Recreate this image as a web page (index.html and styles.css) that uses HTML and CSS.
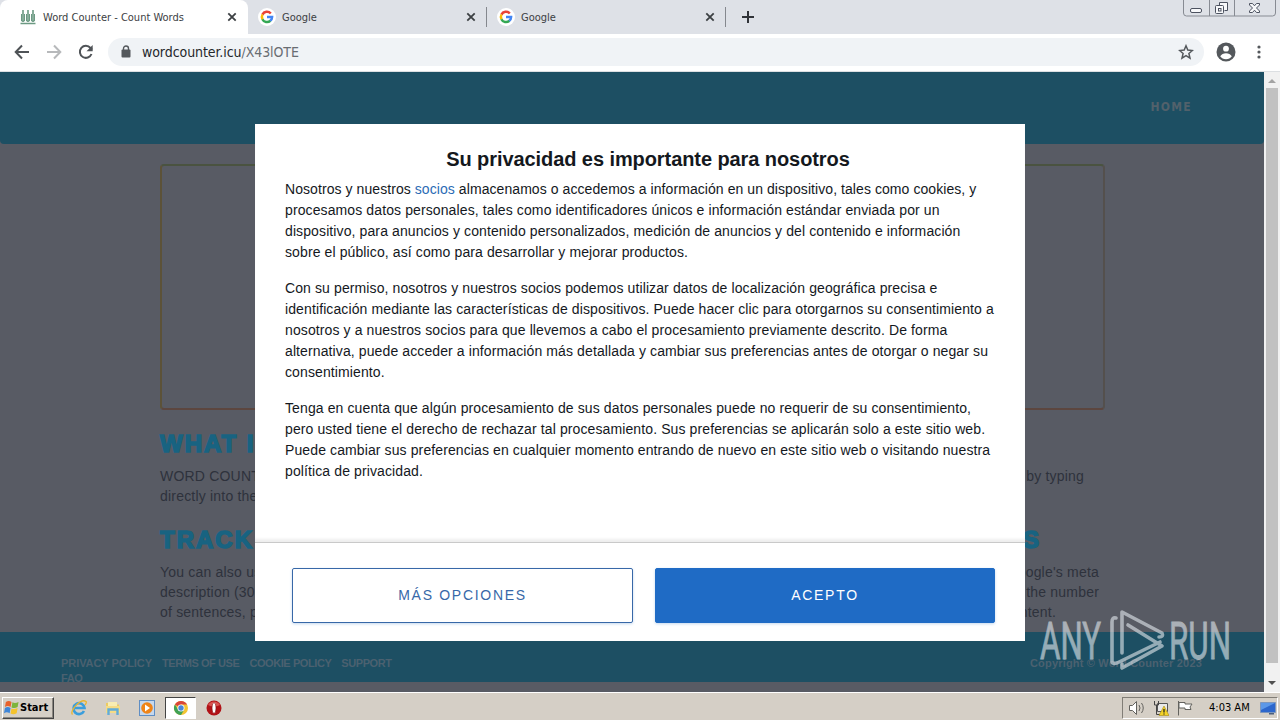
FILE: index.html
```html
<!DOCTYPE html>
<html lang="es">
  <head>
    <meta charset="utf-8">
    <title>Word Counter - Count Words</title>
    <link rel="stylesheet" href="styles.css">
  </head>
  <body>
    <svg width="0" height="0" class="defs">
      <symbol id="google" viewBox="0 0 18 18">
        <circle cx="9" cy="9" r="9" fill="#fff"/>
        <g fill="none" stroke-width="2.5">
          <path d="M4.4 6.6A5.1 5.1 0 0 1 12.8 5.5" stroke="#ea4335"/>
          <path d="M4.5 11.4A5.1 5.1 0 0 1 4.5 6.5" stroke="#fbbc05"/>
          <path d="M12.4 12.8A5.1 5.1 0 0 1 4.4 11.2" stroke="#34a853"/>
          <path d="M9 9H14.1A5.1 5.1 0 0 1 12.2 12.9" stroke="#4285f4"/>
        </g>
      </symbol>
      <symbol id="close" viewBox="0 0 10 10">
        <path d="M1.3 1.3l7.4 7.4M8.7 1.3L1.3 8.7" stroke="#3c4043" stroke-width="1.8"/>
      </symbol>
    </svg>

    <div class="tabs">
      <div class="tab active">
        <svg class="favicon" viewBox="0 0 16 16" fill="none" stroke="#6c9a83">
          <path d="M3 1v12M8 1v12M13 1v12" stroke-width="1.6"/>
          <path d="M1.5 5v7h3V5M6.5 5v7h3V5M11.5 5v7h3V5" stroke-width="1"/>
          <path d="M.5 14.500h15" stroke-width="1.500"/>
        </svg>
        <span class="tab-title">Word Counter - Count Words</span>
        <svg class="close"><use href="#close"/></svg>
      </div>
      <div class="tab">
        <svg class="google"><use href="#google"/></svg>
        <span class="tab-title">Google</span>
        <svg class="close"><use href="#close"/></svg>
      </div>
      <div class="tab">
        <svg class="google"><use href="#google"/></svg>
        <span class="tab-title">Google</span>
        <svg class="close"><use href="#close"/></svg>
      </div>
      <svg class="new-tab" viewBox="0 0 12 12"><path d="M6 0v12M0 6h12" stroke="#303338" stroke-width="2"/></svg>
      <svg class="window-buttons" viewBox="0 0 94 17" fill="none">
        <path d="M.5 0v13q0 3 3 3h86q3 0 3-3V0M26.500 0v16M51.500 0v16" stroke="#878b93"/>
        <g stroke="#4c5260">
          <rect x="7.500" y="8.500" width="11" height="4" rx="1.500" fill="#f7f8fa"/>
          <path d="M36.500 5.500v-3h8v8h-3" fill="#f7f8fa"/>
          <rect x="32.500" y="5.500" width="8" height="8" rx="1" fill="#f7f8fa"/>
          <rect x="35.500" y="8.500" width="2.500" height="2.500"/>
          <path d="M66.500 3.500h3l2 2.300 2-2.300h3v1.500l-3 3 3 3v1.500h-3l-2-2.300-2 2.300h-3V11l3-3-3-3z" fill="#f7f8fa"/>
        </g>
      </svg>
    </div>

    <div class="toolbar">
      <svg class="nav-icon" viewBox="0 0 16 16" fill="none" stroke="#4f5357" stroke-width="2"><path d="M15 8H2M8 1.500L1.700 8 8 14.500"/></svg>
      <svg class="nav-icon" viewBox="0 0 16 16" fill="none" stroke="#b7b9bb" stroke-width="2"><path d="M1 8h13M8 1.500L14.300 8 8 14.500"/></svg>
      <svg class="nav-icon" viewBox="0 0 16 16" fill="none" stroke="#4f5357" stroke-width="2"><path d="M13.500 10A6 6 0 1 1 12.500 4L14 5.700"/><path d="M14.700 1v6.200H8.500z" fill="#4f5357" stroke="none"/></svg>
      <div class="address">
        <svg class="lock" viewBox="0 0 10 13"><path d="M2.500 5V3.500a2.500 2.500 0 0 1 5 0V5" fill="none" stroke="#54585c" stroke-width="1.400"/><rect x="0.500" y="4.500" width="9" height="8" rx="1" fill="#54585c"/></svg>
        <span class="url">wordcounter.icu<span class="path">/X43lOTE</span></span>
        <svg class="star" viewBox="0 0 16 16" fill="none" stroke="#54585c" stroke-width="1.500"><path d="M8 1.800l1.800 4.300 4.600.4-3.500 3 1.100 4.600L8 11.700l-4 2.400 1.100-4.600-3.500-3 4.600-.4z"/></svg>
      </div>
      <svg class="avatar" viewBox="0 0 20 20"><circle cx="10" cy="10" r="9.500" fill="#54585c"/><circle cx="10" cy="6.700" r="2.900" fill="#fff"/><path d="M4.200 14.300q2-3 5.800-3t5.800 3q-2 2.900-5.800 2.900t-5.800-2.900z" fill="#fff"/></svg>
      <svg class="kebab" viewBox="0 0 4 14" fill="#54585c"><circle cx="2" cy="2" r="1.600"/><circle cx="2" cy="7" r="1.600"/><circle cx="2" cy="12" r="1.600"/></svg>
    </div>

    <div class="viewport">
      <div class="site">
        <header>HOME</header>
        <main>
          <div class="editor"></div>
          <h2>WHAT I</h2>
          <p class="row"><span>WORD COUNT</span><span class="end-a">by typing</span></p>
          <p class="row"><span>directly into the</span></p>
          <h2 class="row"><span>TRACK</span><span class="end-h">S</span></h2>
          <p class="row"><span>You can also us</span><span>oogle's meta</span></p>
          <p class="row"><span>description (30</span><span>the number</span></p>
          <p class="row"><span>of sentences, p</span><span class="end-b">ntent.</span></p>
        </main>
        <footer>
          <div class="links">
            <span class="first">PRIVACY POLICY</span><span>TERMS OF USE</span><span>COOKIE POLICY</span><span>SUPPORT</span><span>FAQ</span>
          </div>
          <div class="copyright">Copyright © Word Counter 2023</div>
        </footer>
      </div>
      <div class="scrollbar">
        <svg viewBox="0 0 8 4"><path d="M0 4l4-4 4 4z" fill="#a3a3a3"/></svg>
        <div class="thumb"></div>
        <svg viewBox="0 0 8 4"><path d="M0 0l4 4 4-4z" fill="#505050"/></svg>
      </div>

      <div class="modal">
        <div class="modal-body">
          <h1>Su privacidad es importante para nosotros</h1>
          <p><span class="tight">Nosotros y nuestros <a>socios</a> almacenamos o accedemos a información en un dispositivo, tales como cookies, y</span><br>
            procesamos datos personales, tales como identificadores únicos e información estándar enviada por un<br>
            dispositivo, para anuncios y contenido personalizados, medición de anuncios y del contenido e información<br>
            sobre el público, así como para desarrollar y mejorar productos.</p>
          <p>Con su permiso, nosotros y nuestros socios podemos utilizar datos de localización geográfica precisa e<br>
            identificación mediante las características de dispositivos. Puede hacer clic para otorgarnos su consentimiento a<br>
            nosotros y a nuestros socios para que llevemos a cabo el procesamiento previamente descrito. De forma<br>
            alternativa, puede acceder a información más detallada y cambiar sus preferencias antes de otorgar o negar su<br>
            consentimiento.</p>
          <p>Tenga en cuenta que algún procesamiento de sus datos personales puede no requerir de su consentimiento,<br>
            pero usted tiene el derecho de rechazar tal procesamiento. Sus preferencias se aplicarán solo a este sitio web.<br>
            Puede cambiar sus preferencias en cualquier momento entrando de nuevo en este sitio web o visitando nuestra<br>
            política de privacidad.</p>
        </div>
        <div class="modal-actions">
          <button>MÁS OPCIONES</button>
          <button class="primary">ACEPTO</button>
        </div>
      </div>

      <svg class="watermark" viewBox="0 0 200 64">
        <text x="5" y="51" textLength="61" lengthAdjust="spacingAndGlyphs">ANY</text>
        <text x="134" y="51" textLength="62" lengthAdjust="spacingAndGlyphs">RUN</text>
        <g fill="none" stroke-width="3.6" stroke-linejoin="round" stroke-linecap="round">
          <path d="M81 10q-4-1-4 4v40q0 2 5 1l43-21"/>
          <path d="M87 45V4l40 21q2 4-3 4"/>
          <path d="M93 17l34 21-40 22v-4"/>
        </g>
      </svg>
    </div>

    <div class="taskbar">
      <div class="start">
        <svg viewBox="0 0 16 15"><path d="M2 1.500q3-2 6 0L7 7q-3-2-6 0z" fill="#e8622c"/><path d="M9 2q3 1.500 6.500-.5l-1 5.500q-3 2-6.500.5z" fill="#7db43a"/><path d="M1 8q3-2 6 0l-1 5.500q-3-2-6 0z" fill="#3f86d8"/><path d="M8 8.500q3 1.500 6.500-.5l-1 5.500q-3 2-6.500.5z" fill="#f5c32c"/></svg>
        <span>Start</span>
      </div>
      <div class="apps">
        <svg viewBox="0 0 16 16" fill="none"><path d="M13 11a5.500 5.500 0 1 1 .5-3H4" stroke="#3b9edc" stroke-width="2.600"/><path d="M1.500 14.500C-2 11 10-2 15 1.500q1 1-1 3.500" stroke="#e9b52f" stroke-width="1.300"/></svg>
        <svg viewBox="0 0 16 16"><path d="M1 3h5l1 1.500h7V13H1z" fill="#eccb63"/><path d="M3 2h9v4H3z" fill="#f8edb2"/><path d="M1 6h14v7H1z" fill="#f5dc86"/><path d="M3.500 15V9.500h9V15" fill="none" stroke="#62acd8" stroke-width="2.400"/></svg>
        <svg viewBox="0 0 16 16"><rect x=".5" y=".5" width="15" height="15" fill="#c6d8ed" stroke="#5f8ec4"/><circle cx="8" cy="8" r="5.800" fill="#ef8418"/><path d="M6 4.500l5 3.500-5 3.500z" fill="#fff"/></svg>
        <div class="app-active">
          <svg viewBox="0 0 16 16"><circle cx="8" cy="8" r="7" fill="#f3c433"/><path d="M8 8L1.900 4.500A7 7 0 0 1 14.100 4.500H8z" fill="#d9453b"/><path d="M1.900 4.500A7 7 0 0 0 8 15l3.200-5.200L8 8 5 9.500z" fill="#3fa155"/><circle cx="8" cy="8" r="3.500" fill="#fff"/><circle cx="8" cy="8" r="2.700" fill="#4a86d8"/></svg>
        </div>
        <svg viewBox="0 0 16 16"><circle cx="8" cy="8" r="7.500" fill="#b11217"/><path d="M2 5a7 7 0 0 1 12 0q-6 3-12 0z" fill="#d9534f"/><ellipse cx="8" cy="8" rx="2" ry="5.300" fill="#fff" stroke="#7d0a0e" stroke-width=".6"/></svg>
      </div>
      <div class="tray">
        <svg viewBox="0 0 16 16" fill="#fff" stroke="#63625e"><path d="M.5 5.500h3l4-4v13l-4-4h-3z"/><path d="M10 5q2 3 0 6M12.500 3q3.500 5 0 10" fill="none"/></svg>
        <svg viewBox="0 0 16 16"><path d="M4.500 3.500h10v8h-10z" fill="#e9e9e9" stroke="#555"/><path d="M1.500 1v4h4V1M3.500 5v9.500h5" fill="none" stroke="#444"/><path d="M11 6l5 9.500H6z" fill="#f4d327" stroke="#a88a10" stroke-width=".6"/><path d="M11 9v3.500M11 13.500v1" stroke="#222" stroke-width="1.300"/></svg>
        <svg viewBox="0 0 16 16" fill="#fff" stroke="#63625e"><path d="M1.500 1v14.500M2 2.500h6v1.500h7l-2 3 1 2.500H8V8H2z"/></svg>
        <span class="clock">4:03 AM</span>
        <svg viewBox="0 0 16 16"><path d="M.5 2.500h15v10H.5z" fill="#2d67cc" stroke="#7d97bd"/><path d="M1 3h14L1 10z" fill="#5c98e8"/><path d="M9 13h5v1.500H9z" fill="#4c5f7c"/></svg>
      </div>
    </div>
  </body>
</html>
```

FILE: styles.css
```css
* {
  box-sizing: border-box;
}

body {
  margin: 0;
  width: 1280px;
  height: 720px;
  overflow: hidden;
  display: flex;
  flex-direction: column;
  font-family: "Liberation Sans", Arial, sans-serif;
}

svg {
  display: block;
  flex: none;
}

.defs {
  position: absolute;
}

/* browser tabs */
.tabs {
  display: flex;
  align-items: center;
  height: 34px;
  flex: none;
  background: #dee1e7;
}

.tab {
  display: flex;
  align-items: center;
  width: 239px;
  height: 20px;
  padding: 0 10px;
  border-right: 1px solid #85888e;
}

.tab.active {
  width: 248px;
  height: 34px;
  padding: 0 11px 0 20px;
  border: 0;
  border-radius: 8px 8px 0 0;
  background: #fff;
}

.favicon {
  width: 16px;
  height: 16px;
  margin-right: 7px;
}

.google {
  width: 18px;
  height: 18px;
  margin-right: 6px;
}

.tab-title {
  flex: 1;
  font: 11px "DejaVu Sans Condensed", "DejaVu Sans", sans-serif;
  color: #3c4043;
  white-space: nowrap;
}

.close {
  width: 10px;
  height: 10px;
}

.new-tab {
  width: 12px;
  height: 12px;
  margin-left: 16px;
}

.window-buttons {
  width: 94px;
  height: 17px;
  margin: 0 3px 0 auto;
  align-self: flex-start;
}

/* address bar */
.toolbar {
  display: flex;
  align-items: center;
  height: 38px;
  flex: none;
  padding: 0 19px 2px 14px;
  border-bottom: 1px solid #dcdfe2;
  background: #fff;
}

.nav-icon {
  width: 16px;
  height: 16px;
  margin-right: 16px;
}

.address {
  display: flex;
  align-items: center;
  width: 1096px;
  height: 28px;
  margin-left: -2px;
  padding: 0 10px 0 13px;
  border-radius: 14px;
  background: #f0f3f6;
}

.lock {
  width: 10px;
  height: 13px;
  margin-right: 11px;
}

.url {
  flex: 1;
  font: 14px "DejaVu Sans Condensed", "DejaVu Sans", sans-serif;
  letter-spacing: -0.07px;
  color: #24272b;
}

.path {
  color: #696d72;
}

.star {
  width: 16px;
  height: 16px;
}

.avatar {
  width: 20px;
  height: 20px;
  margin-left: 12px;
}

.kebab {
  width: 4px;
  height: 14px;
  margin-left: auto;
}

/* page */
.viewport {
  position: relative;
  display: flex;
  height: 620px;
  flex: none;
}

.site {
  width: 1264px;
  background: #585b64;
}

header {
  height: 72px;
  padding: 27px 72px 0 0;
  border-radius: 0 0 4px 4px;
  background: #1d4f63;
  font: bold 12px/17px "DejaVu Sans Condensed", "DejaVu Sans", sans-serif;
  letter-spacing: 1.3px;
  text-align: right;
  color: #52616b;
}

main {
  width: 945px;
  height: 488px;
  margin-left: 160px;
  padding-top: 20px;
}

.editor {
  height: 246px;
  border: 2px solid;
  border-color: #4a5340 #54504d #5c463f #5c5238;
  border-radius: 4px;
}

h2 {
  height: 56px;
  margin: 0;
  padding-top: 19px;
  font-size: 24px;
  line-height: 30px;
  letter-spacing: 2px;
  color: #186381;
  -webkit-text-stroke: 1.6px #186381;
  white-space: nowrap;
}

.row {
  display: flex;
  justify-content: space-between;
}

main p {
  height: 20px;
  margin: 0;
  padding-right: 6px;
  font-size: 14px;
  line-height: 20px;
  letter-spacing: 0.2px;
  color: #2e323c;
}

.end-a {
  margin-right: 15px;
}

.end-b {
  margin-right: 43px;
}

.end-h {
  margin-right: 64px;
}

footer {
  display: flex;
  justify-content: space-between;
  height: 50px;
  padding: 24px 62px 0 61px;
  overflow: hidden;
  background: #1d4f63;
  font-size: 11px;
  font-weight: bold;
  line-height: 15px;
  color: #4b6170;
}

.links {
  display: flex;
  flex-wrap: wrap;
  column-gap: 10px;
  width: 360px;
  height: 30px;
  letter-spacing: -0.42px;
}

.links .first {
  letter-spacing: -0.07px;
}

.copyright {
  letter-spacing: 0.18px;
}

.scrollbar {
  display: flex;
  flex-direction: column;
  align-items: center;
  width: 16px;
  padding: 7px 0;
  background: #f1f1f1;
}

.scrollbar svg {
  width: 8px;
  height: 4px;
}

.thumb {
  width: 12px;
  height: 575px;
  margin: 5px 0 18px;
  background: #c1c1c1;
}

/* consent dialog, lies over the page */
.modal {
  position: absolute;
  left: 255px;
  top: 52px;
  width: 770px;
  height: 517px;
  background: #fff;
}

.modal-body {
  height: 419px;
  padding: 23px 30px 0;
  border-bottom: 1px solid #c9c9c9;
  box-shadow: inset 0 -4px 3px -1px #eee;
}

h1 {
  margin: 0 0 8px;
  padding-left: 16px;
  font-size: 20px;
  line-height: 24px;
  letter-spacing: -0.08px;
  text-align: center;
  color: #14181d;
}

.modal p {
  margin: 0 0 15px;
  font-size: 14px;
  line-height: 21px;
  letter-spacing: 0.11px;
  white-space: nowrap;
  color: #14181d;
}

.tight {
  letter-spacing: 0.07px;
}

.modal a {
  color: #2b6cb5;
}

.modal-actions {
  display: flex;
  gap: 22px;
  padding: 25px 30px 0 37px;
}

button {
  width: 341px;
  height: 55px;
  padding: 0 0 2px;
  border: 1px solid #3868a8;
  border-radius: 2px;
  background: #fff;
  box-shadow: 0 1px 3px #c4d8ee;
  font: 14px "Liberation Sans", Arial, sans-serif;
  letter-spacing: 1.7px;
  color: #3868a8;
}

.primary {
  width: 340px;
  background: #1f6bc5;
  border-color: #1f6bc5;
  color: #fff;
}

.watermark {
  position: absolute;
  left: 1035px;
  top: 536px;
  width: 200px;
  height: 64px;
  fill: #dfe5ea;
  stroke: #dfe5ea;
  stroke-width: 0.8px;
  opacity: 0.62;
  font: 52px Roboto, sans-serif;
}

/* windows taskbar */
.taskbar {
  display: flex;
  align-items: center;
  height: 28px;
  flex: none;
  padding: 2px 2px 0;
  border-top: 1px solid #fff;
  background: #d5cfc6;
}

.start {
  display: flex;
  align-items: center;
  gap: 1px;
  width: 52px;
  height: 22px;
  padding-left: 1px;
  border: 1px solid;
  border-color: #fff #444 #444 #fff;
  box-shadow: inset -1px -1px #8b8780;
  font: bold 11px "DejaVu Sans Condensed", "DejaVu Sans", sans-serif;
}

.start svg {
  width: 15px;
  height: 15px;
}

.apps {
  display: flex;
  align-items: center;
  margin-left: 17px;
}

.apps > svg {
  width: 16px;
  height: 16px;
  margin-right: 18px;
}

.app-active {
  display: flex;
  align-items: center;
  justify-content: center;
  width: 31px;
  height: 22px;
  margin: 0 10px 0 -8px;
  border: 1px solid;
  border-color: #444 #fff #fff #444;
  background: #fff;
}

.app-active svg {
  width: 16px;
  height: 16px;
}

.tray {
  display: flex;
  align-items: center;
  gap: 8px;
  width: 156px;
  height: 22px;
  margin-left: auto;
  padding-left: 6px;
  border: 1px solid;
  border-color: #817d76 #fff #fff #817d76;
}

.tray svg {
  width: 16px;
  height: 16px;
}

.clock {
  width: 42px;
  margin: 0 1px 0 8px;
  font: 11px "DejaVu Sans Condensed", "DejaVu Sans", sans-serif;
  white-space: nowrap;
}
```
